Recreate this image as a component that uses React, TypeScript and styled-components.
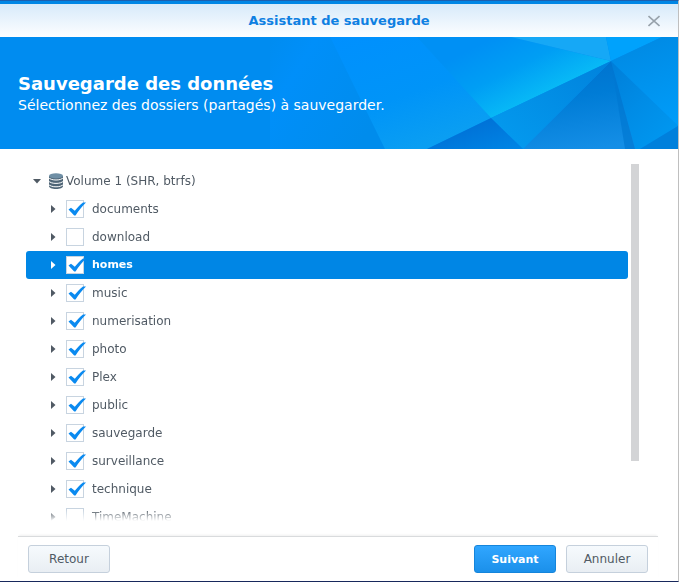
import React, { useState } from "react";
import styled, { createGlobalStyle } from "styled-components";

const GlobalStyle = createGlobalStyle`
  * { box-sizing: border-box; }
  body {
    margin: 0;
    background: #fff;
    font-family: Verdana, "DejaVu Sans", sans-serif;
    font-size: 12px;
    color: #505a64;
  }
  button, input { font: inherit; color: inherit; margin: 0; }
`;

const Window = styled.main`
  display: flex;
  flex-direction: column;
  height: 100vh;
  background: #fff;
  border-top: 1px solid #1b5fae;
  border-right: 1px solid #bfbfbf;
  border-bottom: 1px solid #17285c;
`;

const TitleBar = styled.header`
  display: grid;
  grid-template-columns: 48px 1fr 48px;
  align-items: center;
  height: 36px;
  flex: none;
  border-top: 3px solid #0086e5;
  background: linear-gradient(#d7eafa, #fdfeff);
`;

const Title = styled.h1`
  grid-column: 2;
  margin: 0;
  text-align: center;
  font-size: 13px;
  line-height: 18px;
  font-weight: bold;
  color: #0f80e2;
`;

const CloseButton = styled.button`
  justify-self: center;
  display: flex;
  padding: 6px;
  border: 0;
  background: none;
`;

const Banner = styled.section`
  position: relative;
  flex: none;
  height: 112px;
  padding: 36px 18px 0;
  background: #008cf0;
  color: #fff;
  overflow: hidden;
`;

const BannerArt = styled.svg`
  position: absolute;
  top: 0;
  right: 0;
`;

const BannerText = styled.div`
  position: relative;
`;

const Heading = styled.h2`
  margin: 0;
  font-size: 18px;
  line-height: 22px;
  font-weight: bold;
`;

const Subheading = styled.p`
  margin: 0;
  font-size: 14px;
  line-height: 20px;
`;

const Content = styled.section`
  display: flex;
  flex: 1;
  min-height: 0;
  gap: 3px;
  padding: 15px 39px 14px 26px;
`;

const TreeView = styled.div`
  flex: 1;
  min-width: 0;
  overflow: hidden;
  padding-top: 3px;
  mask-image: linear-gradient(#000 calc(100% - 12px), transparent calc(100% - 1px));
`;

const ScrollTrack = styled.div`
  width: 8px;
`;

const ScrollThumb = styled.div`
  height: 83%;
  background: #d3d4d6;
`;

const List = styled.ul`
  list-style: none;
  margin: 0;
  padding: 0;
`;

const Row = styled.div<{ $level: number; $selected?: boolean }>`
  display: flex;
  align-items: center;
  height: 28px;
  padding-left: ${(p) => (p.$level ? 20 : 4)}px;
  border-radius: 3px;
  line-height: 18px;
  background: ${(p) => (p.$selected ? "#0086e5" : "transparent")};
  color: ${(p) => (p.$selected ? "#fff" : "#505a64")};
  font-size: ${(p) => (p.$selected ? 11 : 12)}px;
  font-weight: ${(p) => (p.$selected ? "bold" : "normal")};
`;

const Toggle = styled.button`
  display: flex;
  align-items: center;
  justify-content: center;
  width: 14px;
  height: 18px;
  padding: 0;
  border: 0;
  background: none;
`;

const VolumeIcon = styled.svg`
  margin: 0 2px 0 4px;
`;

const CheckLabel = styled.label`
  display: flex;
  align-items: center;
  gap: 8px;
  margin-left: 6px;
`;

const CheckBox = styled.span`
  position: relative;
  display: flex;

  svg {
    position: absolute;
    top: 0;
    left: 0;
    overflow: visible;
    pointer-events: none;
  }
`;

const CheckInput = styled.input`
  appearance: none;
  width: 18px;
  height: 18px;
  border: 1px solid #c8d4e0;
  background: #fff;
`;

const Footer = styled.footer`
  display: flex;
  flex: none;
  gap: 10px;
  margin: 0 20px 0 18px;
  padding: 8px 10px;
  border-top: 1px solid #d9dbdd;
  box-shadow: 0 -2px 2px -1px #f0f0f0;
`;

const Button = styled.button<{ $primary?: boolean; $push?: boolean }>`
  width: 82px;
  height: 28px;
  padding: 0;
  border-radius: 3px;
  border: 1px solid ${(p) => (p.$primary ? "#1585db" : "#c5d0dc")};
  background: ${(p) =>
    p.$primary ? "linear-gradient(#30a6ff, #1b90ea)" : "linear-gradient(#f6fafd, #e9eef3)"};
  color: ${(p) => (p.$primary ? "#fff" : "#505a64")};
  font-size: ${(p) => (p.$primary ? 11 : 12)}px;
  font-weight: ${(p) => (p.$primary ? "bold" : "normal")};
  margin-right: ${(p) => (p.$push ? "auto" : "0")};
`;

const initialFolders = [
  { name: "documents", checked: true },
  { name: "download", checked: false },
  { name: "homes", checked: true },
  { name: "music", checked: true },
  { name: "numerisation", checked: true },
  { name: "photo", checked: true },
  { name: "Plex", checked: true },
  { name: "public", checked: true },
  { name: "sauvegarde", checked: true },
  { name: "surveillance", checked: true },
  { name: "technique", checked: true },
  { name: "TimeMachine", checked: false },
];

function Facets() {
  return (
    <BannerArt width="408" height="112" viewBox="270 0 408 112" aria-hidden="true">
      <defs>
        <linearGradient id="start" x1="0" x2="1" y1="0" y2="0.6">
          <stop offset="0" stopColor="#008cf0" />
          <stop offset="0.3" stopColor="#008ff9" />
          <stop offset="1" stopColor="#008cec" />
        </linearGradient>
        <linearGradient id="left" x1="0" x2="0.5" y1="0" y2="1">
          <stop offset="0" stopColor="#0090fe" />
          <stop offset="0.6" stopColor="#0094f8" />
          <stop offset="1" stopColor="#0a9ef2" />
        </linearGradient>
        <linearGradient id="glow" gradientUnits="userSpaceOnUse" x1="495" y1="0" x2="528" y2="66">
          <stop offset="0" stopColor="#0090f4" />
          <stop offset="0.5" stopColor="#009ef4" />
          <stop offset="1" stopColor="#08baf6" />
        </linearGradient>
        <linearGradient id="mid" x1="1" x2="0" y1="0" y2="1">
          <stop offset="0" stopColor="#0082dc" />
          <stop offset="1" stopColor="#049cf0" />
        </linearGradient>
        <linearGradient id="low" x1="0" x2="1" y1="0" y2="1">
          <stop offset="0" stopColor="#0068d0" />
          <stop offset="1" stopColor="#0086e6" />
        </linearGradient>
        <linearGradient id="dark" x1="0.4" x2="0.6" y1="0" y2="1">
          <stop offset="0" stopColor="#0072ce" />
          <stop offset="0.4" stopColor="#007cd6" />
          <stop offset="1" stopColor="#148ee6" />
        </linearGradient>
        <linearGradient id="right" x1="0" x2="0.8" y1="0" y2="1">
          <stop offset="0" stopColor="#007ed8" />
          <stop offset="0.5" stopColor="#008ce6" />
          <stop offset="1" stopColor="#0098f0" />
        </linearGradient>
        <linearGradient id="edge" x1="0.5" x2="0.8" y1="0" y2="1">
          <stop offset="0" stopColor="#008ae4" />
          <stop offset="1" stopColor="#009cf8" />
        </linearGradient>
      </defs>
      <path d="M270 0H330L385 112H270Z" fill="url(#start)" />
      <path d="M330 0H420L491 81L427 112H385Z" fill="url(#left)" />
      <path d="M417 0H511L611 24L491 81Z" fill="url(#glow)" />
      <path d="M511 0H606L611 24Z" fill="#16a8f6" />
      <path d="M606 0H662L611 24Z" fill="#00a2fc" />
      <path d="M662 0H678V89L611 24Z" fill="url(#edge)" />
      <path d="M611 24L678 89L640 112H635Z" fill="url(#right)" />
      <path d="M678 89V112H640Z" fill="#0080dc" />
      <path d="M611 24L635 112H523Z" fill="url(#dark)" />
      <path d="M611 24L635 112H625Z" fill="#0078d2" opacity="0.7" />
      <path d="M611 24L523 112L491 81Z" fill="url(#mid)" />
      <path d="M491 81L523 112H427Z" fill="url(#low)" />
    </BannerArt>
  );
}

function Arrow({ open }: { open?: boolean }) {
  return open ? (
    <svg width="8" height="5" viewBox="0 0 8 5" aria-hidden="true">
      <path d="M0 0H8L4 4.5Z" fill="currentColor" />
    </svg>
  ) : (
    <svg width="5" height="8" viewBox="0 0 5 8" aria-hidden="true">
      <path d="M0 0V8L4.5 4Z" fill="currentColor" />
    </svg>
  );
}

export default function App() {
  const [folders, setFolders] = useState(initialFolders);
  const [selected, setSelected] = useState("homes");

  const toggle = (name: string) =>
    setFolders((all) => all.map((f) => (f.name === name ? { ...f, checked: !f.checked } : f)));

  return (
    <>
      <GlobalStyle />
      <Window>
        <TitleBar>
          <Title>Assistant de sauvegarde</Title>
          <CloseButton aria-label="Fermer">
            <svg width="12" height="12" viewBox="0 0 12 12" aria-hidden="true">
              <path d="M0.5 1L11.5 11M11.5 1L0.5 11" stroke="#98a2ab" strokeWidth="1.6" fill="none" />
            </svg>
          </CloseButton>
        </TitleBar>
        <Banner>
          <Facets />
          <BannerText>
            <Heading>Sauvegarde des données</Heading>
            <Subheading>Sélectionnez des dossiers (partagés) à sauvegarder.</Subheading>
          </BannerText>
        </Banner>
        <Content>
          <TreeView>
            <Row $level={0}>
              <Toggle aria-label="Réduire Volume 1">
                <Arrow open />
              </Toggle>
              <VolumeIcon width="16" height="16" viewBox="0 0 16 16" aria-hidden="true">
                <path
                  d="M1 3V13C1 14.8 4 16 8 16S15 14.8 15 13V3Z"
                  fill="#4f6576"
                />
                <path
                  d="M0 4.2C2 6.4 5 7 8 7S14 6.400 16 4.200M0 7.600C2 9.800 5 10.400 8 10.400S14 9.800 16 7.600M0 11C2 13.200 5 13.800 8 13.800S14 13.200 16 11"
                  stroke="#fff"
                  strokeWidth="1"
                  fill="none"
                />
                <ellipse cx="8" cy="2.900" rx="7" ry="2.700" fill="#6f8fa5" />
              </VolumeIcon>
              <span>Volume 1 (SHR, btrfs)</span>
            </Row>
            <List>
              {folders.map((f) => (
                <li key={f.name}>
                  <Row $level={1} $selected={selected === f.name} onClick={() => setSelected(f.name)}>
                    <Toggle aria-label={`Développer ${f.name}`}>
                      <Arrow />
                    </Toggle>
                    <CheckLabel>
                      <CheckBox>
                        <CheckInput type="checkbox" checked={f.checked} onChange={() => toggle(f.name)} />
                        {f.checked && (
                          <svg width="20" height="18" viewBox="0 0 20 18" aria-hidden="true">
                            <path
                              d="M2.500 9.500L5 7.800L8.800 10.800C11.500 7.500 14 4.800 17 2.500H20C16 6.500 12.500 10.500 9.500 15.500H8.200Z"
                              fill="#0a8af0"
                            />
                          </svg>
                        )}
                      </CheckBox>
                      {f.name}
                    </CheckLabel>
                  </Row>
                </li>
              ))}
            </List>
          </TreeView>
          <ScrollTrack>
            <ScrollThumb />
          </ScrollTrack>
        </Content>
        <Footer>
          <Button $push>Retour</Button>
          <Button $primary>Suivant</Button>
          <Button>Annuler</Button>
        </Footer>
      </Window>
    </>
  );
}
